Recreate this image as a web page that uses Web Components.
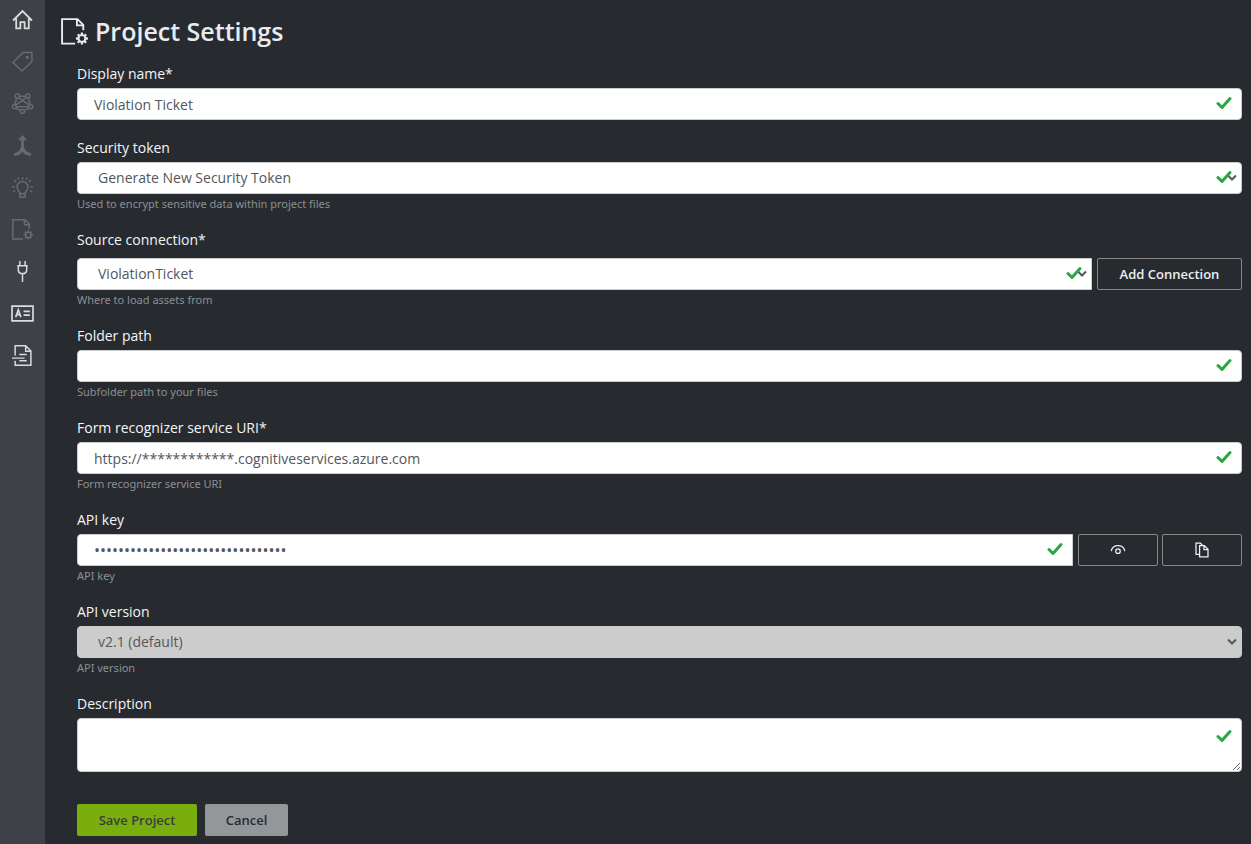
<!DOCTYPE html>
<html lang="en">
<head>
<meta charset="utf-8">
<title>Project Settings</title>
<style>
html, body { height: 100%; }
body { margin: 0; background: #272b30; color: #e9ecef; font: 14px/22px "Open Sans", "Noto Sans", sans-serif; }
</style>
</head>
<body>
<settings-app>
  <side-nav slot="nav"></side-nav>
  <page-title>Project Settings</page-title>
  <project-form>
    <form-field label="Display name*" value="Violation Ticket" valid></form-field>
    <form-field label="Security token" kind="select" value="Generate New Security Token" help="Used to encrypt sensitive data within project files" valid></form-field>
    <form-field class="roomy" label="Source connection*" kind="select" value="ViolationTicket" help="Where to load assets from" valid joined>
      <ui-button slot="actions" variant="outline" class="wide">Add Connection</ui-button>
    </form-field>
    <form-field label="Folder path" help="Subfolder path to your files" valid></form-field>
    <form-field label="Form recognizer service URI*" value="https://************.cognitiveservices.azure.com" help="Form recognizer service URI" valid></form-field>
    <form-field label="API key" kind="password" value="0123456789abcdef0123456789abcdef" help="API key" valid joined>
      <ui-button slot="actions" variant="outline" name="Show or hide key"><ui-icon name="eye" size="16"></ui-icon></ui-button>
      <ui-button slot="actions" variant="outline" name="Copy key"><ui-icon name="copy" size="16"></ui-icon></ui-button>
    </form-field>
    <form-field label="API version" kind="select" value="v2.1 (default)" help="API version" disabled></form-field>
    <form-field label="Description" kind="textarea" valid></form-field>
    <ui-button slot="footer" variant="save">Save Project</ui-button>
    <ui-button slot="footer" variant="cancel">Cancel</ui-button>
  </project-form>
</settings-app>
<script>
const ICONS = {
  home: '<path stroke-width="1.700" d="M1 10 10 1l9 9M4 8v9.500h4v-6h4v6h4V8"/>',
  tag: '<path d="M1 11 10.500 1.500H19V10L9.500 19Z"/><circle cx="14.500" cy="6" r=".8"/>',
  model: '<circle cx="5" cy="2.800" r="2"/><circle cx="15" cy="2.800" r="2"/><circle cx="2.200" cy="13" r="1.900"/><circle cx="17.800" cy="13" r="1.900"/><circle cx="10" cy="17.500" r="1.900"/><path d="M7 3h6M4.500 5 2.500 11M15.500 5l2 6M4 13h12M3.500 14.500l4.700 2M16.500 14.500l-4.700 2M6.500 4.500l10 7M13.500 4.500l-10 7"/>',
  merge: '<path fill="currentColor" stroke="none" d="M10 0 14 4.500 12.800 5.700 11.300 4.200V10c0 3 2.200 6.500 6.700 7.200V20c-3.800 0-6.500-1.500-8-4.200C8.500 18.500 5.800 20 2 20v-2.800C6.500 16.500 8.700 13 8.700 10V4.200L7.200 5.700 6 4.500Z"/>',
  bulb: '<path d="M7.500 16V15C6.500 13.500 4.800 12 4.800 9.500a5.200 5.200 0 0 1 10.400 0c0 2.500-1.700 4-2.700 5.500v1M7.500 16v3h5v-3ZM10 0v2.500M0 9.500h2.500M17.500 9.500H20M2 3l2 1.700M18 3l-2 1.700M.800 14l2.200-1M19.200 14 17 13M5.500.500l1 2M14.500.500l-1 2"/>',
  doc: '<path d="M10.500 19H.800V.800h11.400l4.300 4.300V9M11.800.800V5.500h4.700"/><circle cx="15.500" cy="15.200" r="2.500"/><path stroke-width="1.700" d="M15.500 10.800v1.700M15.500 17.900v1.700M11.100 15.200h1.700M18.200 15.200h1.700M12.400 12.100l1.200 1.200M17.400 17.100l1.200 1.200M18.600 12.100l-1.200 1.200M13.600 17.100l-1.200 1.200"/>',
  plug: '<path d="M7.500 0v4.500M12.500 0v4.500M5 4.500h10M6 4.500V8q0 4 4 4t4-4V4.500M10 12v8"/>',
  card: '<path stroke-width="1.600" d="M0 3h20v14H0ZM3.500 13.500l2.500-7 2.500 7M4.500 11h3M11 8h6M11 11.500h6"/>',
  form: '<path d="M3 10V.700h10l5 5V19.300H3V15M13 .700V6h5M7 9h7M7 15h7M0 12.500h12"/>',
  eye: '<path stroke-width="1.600" d="M1.500 11.500a8.700 8.700 0 0 1 17 0"/><circle cx="10" cy="11.500" r="2.800" stroke-width="1.600"/>',
  copy: '<path stroke-width="1.600" d="M7 15.500H2.500V1.500H8l2.500 2.500M7 4.500h6l4.500 4.500v9.500H7ZM12.500 4.500V9.500h5"/>'
};

function mount(host, html) {
  const root = host.attachShadow({ mode: "open" });
  const tpl = document.createElement("template");
  tpl.innerHTML = html;
  root.append(tpl.content.cloneNode(true));
  return root;
}

customElements.define("ui-icon", class extends HTMLElement {
  constructor() {
    super();
    const size = this.getAttribute("size") || 21;
    mount(this, `<style>:host{display:block}svg{display:block;overflow:visible}</style>
      <svg width="${size}" height="${size}" viewBox="0 0 20 20" fill="none" stroke="currentColor" stroke-width="1.400" aria-hidden="true">${ICONS[this.getAttribute("name")]}</svg>`);
  }
});

customElements.define("side-nav", class extends HTMLElement {
  constructor() {
    super();
    const items = [["home", "Home"], ["tag", "Tag", 1], ["model", "Train", 1], ["merge", "Compose", 1], ["bulb", "Analyze", 1], ["doc", "Project settings", 1], ["plug", "Connections"], ["card", "Prebuilt"], ["form", "Layout"]];
    mount(this, `<style>
      :host{display:block;background:#3e4147}
      nav{display:flex;flex-direction:column;align-items:stretch}
      a{height:42px;display:flex;align-items:center;justify-content:center;color:#dcdcdc}
      a.off{color:#686b6f}
      a:first-child{height:40px}
      </style><nav>${items.map(([i, t, off]) => `<a href="#${i}" aria-label="${t}"${off ? ' class="off"' : ""}><ui-icon name="${i}"></ui-icon></a>`).join("")}</nav>`);
  }
});

customElements.define("settings-app", class extends HTMLElement {
  constructor() {
    super();
    mount(this, `<style>
      :host{display:grid;grid-template-columns:45px minmax(0,1fr);min-height:100%}
      main{padding:13px 9px 8px 16px}
      </style><slot name="nav"></slot><main><slot></slot></main>`);
  }
});

customElements.define("page-title", class extends HTMLElement {
  constructor() {
    super();
    mount(this, `<style>
      :host{display:block}
      h1{margin:0;display:flex;align-items:center;gap:7px;font-size:25px;line-height:36px;font-weight:600}
      </style><h1><ui-icon name="doc" size="27"></ui-icon><slot></slot></h1>`);
  }
});

customElements.define("project-form", class extends HTMLElement {
  constructor() {
    super();
    mount(this, `<style>
      :host{display:block}
      form{display:grid;gap:17px;padding:14px 0 0 16px}
      footer{display:flex;gap:8px;margin-top:15px}
      </style><form><slot></slot><footer><slot name="footer"></slot></footer></form>`);
  }
});

customElements.define("form-field", class extends HTMLElement {
  constructor() {
    super();
    const at = (n) => this.getAttribute(n) || "";
    const kind = at("kind");
    const off = this.hasAttribute("disabled") ? " disabled" : "";
    const control = kind === "select"
      ? `<select id="c"${off}><option>${at("value")}</option></select>`
      : kind === "textarea" ? `<textarea id="c"></textarea>`
      : `<input id="c" type="${kind || "text"}" value="${at("value")}">`;
    mount(this, `<style>
      :host{display:block}
      label{display:block;height:22px;margin-bottom:3px;color:#f4f5f6}
      :host(.roomy) label{margin-bottom:7px}
      .row{display:flex;gap:5px}
      .box{position:relative;flex:1;min-width:0}
      .actions{display:flex;gap:4px}
      .actions:not(.on){display:none}
      input,select,textarea{appearance:none;display:block;box-sizing:border-box;width:100%;height:32px;margin:0;padding:0 36px 0 16px;border:1px solid #ccc;border-radius:4px;background:#fff;color:#52575c;font:inherit;outline:0}
      select{padding-left:20px}
      select:disabled{background:#ccc;opacity:1}
      textarea{height:54px;resize:vertical;padding-top:5px}
      input[type=password]{font-size:16px}
      :host([joined]) :is(input,select){border-radius:4px 0 0 4px}
      svg{position:absolute;pointer-events:none;fill:none}
      .tick{right:10px;top:8px;stroke:#28a745;stroke-width:3}
      textarea ~ .tick{top:11px}
      .arrow{right:5px;top:12px;stroke:#52575c;stroke-width:2}
      small{display:block;font:11px/18px "Noto Sans",sans-serif;height:18px;padding-top:1px;box-sizing:border-box;color:#8c8f92}
      </style>
      <label for="c">${at("label")}</label>
      <div class="row"><div class="box">${control}
      ${kind === "select" ? '<svg class="arrow" width="10" height="8"><path d="M1 1.500l4 4 4-4"/></svg>' : ""}
      ${this.hasAttribute("valid") ? '<svg class="tick" width="16" height="14"><path stroke-linecap="round" stroke-linejoin="round" d="M2 7.500l4 4L14 2.500"/></svg>' : ""}
      </div><div class="actions${this.hasAttribute("joined") ? " on" : ""}"><slot name="actions"></slot></div></div>
      ${at("help") ? `<small>${at("help")}</small>` : ""}`);
  }
});

customElements.define("ui-button", class extends HTMLElement {
  constructor() {
    super();
    const name = this.getAttribute("name");
    mount(this, `<style>
      :host{display:block;width:80px}
      :host(.wide){width:145px}
      :host([variant=save]){width:120px}
      :host([variant=cancel]){width:83px}
      button{display:flex;align-items:center;justify-content:center;box-sizing:border-box;width:100%;height:32px;padding:0;border:0;border-radius:2px;font:600 13px/20px "Open Sans","Noto Sans",sans-serif;white-space:nowrap}
      :host([variant=outline]) button{border:1px solid #8a8886;background:transparent;color:#eceef0}
      :host([variant=save]) button{background:#7aad0e;color:#3a3d40}
      :host([variant=cancel]) button{background:#93979a;color:#272b30}
      </style><button type="button"${name ? ` aria-label="${name}"` : ""}><slot></slot></button>`);
  }
});
</script>
</body>
</html>
